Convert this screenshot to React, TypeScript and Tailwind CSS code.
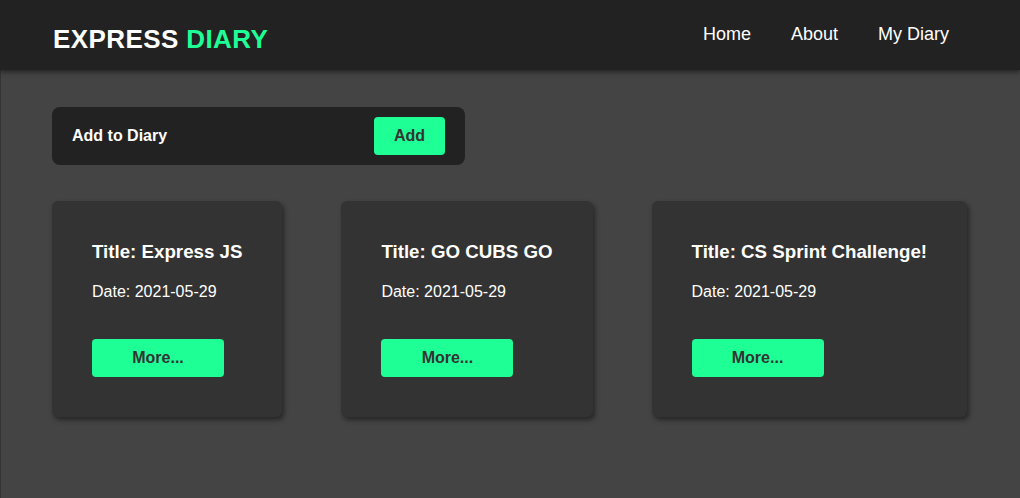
import React from "react";

const entries = [
  { title: "Express JS", date: "2021-05-29" },
  { title: "GO CUBS GO", date: "2021-05-29" },
  { title: "CS Sprint Challenge!", date: "2021-05-29" },
];

export default function App() {
  return (
    <div
      className="flex min-h-screen flex-col bg-[#444444] text-white"
      style={{ fontFamily: '"Liberation Sans", Arial, sans-serif' }}
    >
      <header className="relative z-10 flex h-[70px] shrink-0 items-center justify-between bg-[#222222] pl-[53px] pr-[71px] shadow-[0_2px_5px_rgba(0,0,0,0.5)]">
        <h1 className="mt-[7px] text-[26px] font-bold leading-[30px] tracking-[0.4px]">
          EXPRESS <span className="text-[#1eff96]">DIARY</span>
        </h1>
        <nav className="mb-[2px] flex gap-[40px] text-[18px] leading-[21px]">
          <a>Home</a>
          <a>About</a>
          <a>My Diary</a>
        </nav>
      </header>
      <main className="flex-1 border-l border-[#333333] pl-[51px] pt-[37px] pb-10">
        <div className="flex h-[58px] w-[413px] items-center justify-between rounded-lg bg-[#222222] px-5">
          <span className="text-[16px] font-bold">Add to Diary</span>
          <button className="h-[38px] w-[71px] rounded bg-[#1eff96] text-[16px] font-bold text-[#333333]">
            Add
          </button>
        </div>
        <div className="mt-[36px] flex items-start gap-[59px]">
          {entries.map((e) => (
            <div
              key={e.title}
              className="flex flex-col rounded-md bg-[#333333] px-10 pt-10 pb-10 shadow-[2px_3px_5px_rgba(0,0,0,0.45)]"
            >
              <h3 className="text-[18.72px] font-bold leading-[21px] whitespace-nowrap">
                Title: {e.title}
              </h3>
              <p className="mt-[21px] text-[16px] leading-[18px]">Date: {e.date}</p>
              <button className="mt-[38px] h-[38px] w-[132px] rounded bg-[#1eff96] text-[16px] font-bold text-[#333333]">
                More...
              </button>
            </div>
          ))}
        </div>
      </main>
    </div>
  );
}
